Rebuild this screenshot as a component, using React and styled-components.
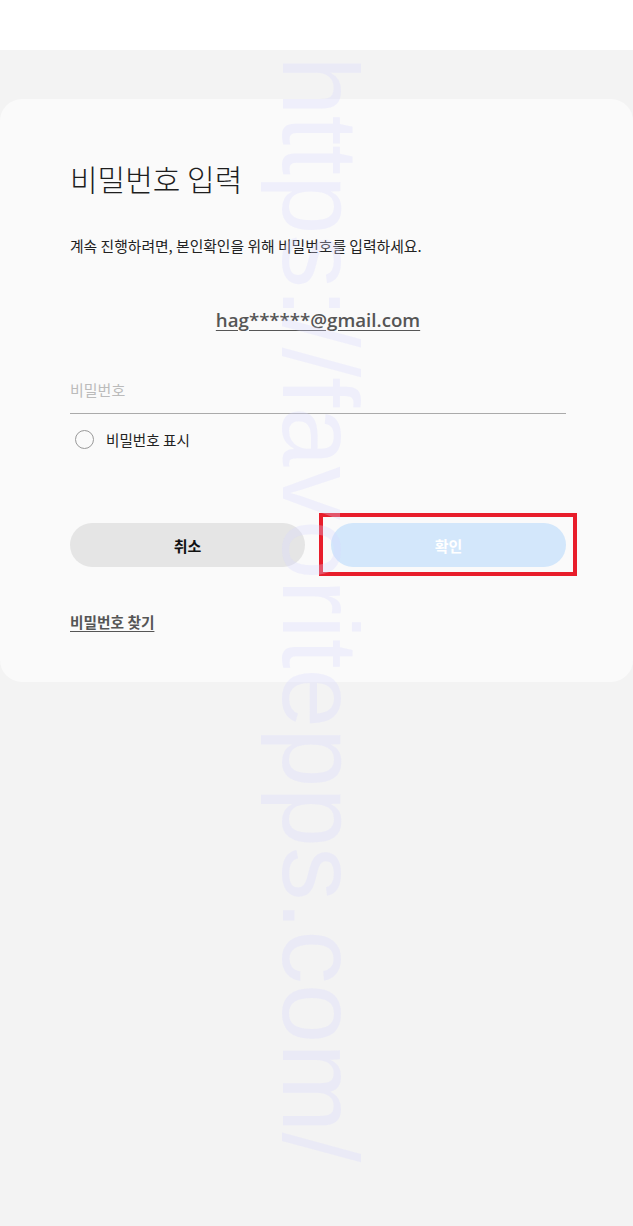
import React, { useState } from 'react'
import styled, { createGlobalStyle } from 'styled-components'

const GlobalStyle = createGlobalStyle`
  html, body {
    margin: 0;
    padding: 0;
    background: #f3f3f3;
  }
  body {
    font-family: "Noto Sans CJK KR", "Noto Sans", sans-serif;
    color: #222;
  }
`

const Page = styled.div`
  position: relative;
  min-height: 1226px;
  overflow: hidden;
  background: #f3f3f3;
`

const TopBar = styled.div`
  height: 50px;
  background: #ffffff;
`

const Card = styled.div`
  margin-top: 49px;
  background: #fafafa;
  border-radius: 22px;
  padding: 55px 67px 50px 70px;
  display: flex;
  flex-direction: column;
`

const Title = styled.h1`
  margin: 0;
  font-size: 30px;
  font-weight: 300;
  line-height: 48px;
  color: #1e1e1e;
`

const Desc = styled.p`
  margin: 33px 0 0;
  font-size: 14.8px;
  line-height: 21px;
  color: #222;
`

const Email = styled.div`
  margin-top: 50px;
  text-align: center;
  font-family: "Open Sans", "Noto Sans", sans-serif;
  font-size: 18.7px;
  font-weight: 600;
  line-height: 27px;
  color: #555;
  text-decoration: underline;
  text-underline-offset: 3px;
`

const PasswordInput = styled.input`
  margin-top: 33px;
  height: 47px;
  padding: 0;
  border: none;
  border-bottom: 1px solid #aaa;
  background: transparent;
  font-family: "Noto Sans CJK KR", sans-serif;
  font-size: 15px;
  color: #222;
  outline: none;
  &::placeholder {
    color: #bbb;
  }
`

const CheckRow = styled.label`
  margin-top: 10px;
  height: 30px;
  display: flex;
  align-items: center;
  gap: 12px;
  padding-left: 5px;
  font-size: 14.6px;
  color: #222;
  cursor: pointer;
`

const Circle = styled.span`
  width: 17px;
  height: 17px;
  border-radius: 50%;
  border: 1.5px solid ${p => (p.$on ? '#1a73e8' : '#999')};
  background: ${p => (p.$on ? '#1a73e8' : 'transparent')};
`

const ButtonRow = styled.div`
  margin-top: 69px;
  display: grid;
  grid-template-columns: 1fr 1fr;
  gap: 26px;
`

const Button = styled.button`
  height: 44px;
  border: none;
  border-radius: 22px;
  background: ${p => (p.$primary ? '#d3e7fb' : '#e5e5e5')};
  color: ${p => (p.$primary ? '#ffffff' : '#111')};
  font-family: "Noto Sans CJK KR", sans-serif;
  font-size: 15px;
  font-weight: 700;
  width: 100%;
`

const Marked = styled.div`
  position: relative;
`

const Highlight = styled.div`
  position: absolute;
  left: -12px;
  right: -11px;
  top: -10px;
  bottom: -9px;
  border: 4px solid #e81d2b;
  pointer-events: none;
`

const FindLink = styled.a`
  margin-top: 44px;
  align-self: flex-start;
  font-size: 14.7px;
  font-weight: 700;
  line-height: 21px;
  color: #555;
  text-decoration: underline;
  text-underline-offset: 3px;
`

const Watermark = styled.div`
  position: absolute;
  left: 373px;
  top: 56px;
  transform: rotate(90deg);
  transform-origin: top left;
  font-family: "Liberation Sans", Arial, sans-serif;
  font-size: 107px;
  line-height: 1;
  white-space: nowrap;
  color: rgba(216, 216, 255, 0.3);
  pointer-events: none;
`

export default function App() {
  const [show, setShow] = useState(false)
  const [pw, setPw] = useState('')

  return (
    <Page>
      <GlobalStyle />
      <TopBar />
      <Card>
        <Title>비밀번호 입력</Title>
        <Desc>계속 진행하려면, 본인확인을 위해 비밀번호를 입력하세요.</Desc>
        <Email>hag******@gmail.com</Email>
        <PasswordInput
          type={show ? 'text' : 'password'}
          placeholder="비밀번호"
          value={pw}
          onChange={e => setPw(e.target.value)}
        />
        <CheckRow onClick={() => setShow(!show)}>
          <Circle $on={show} />
          비밀번호 표시
        </CheckRow>
        <ButtonRow>
          <Button>취소</Button>
          <Marked>
            <Button $primary>확인</Button>
            <Highlight />
          </Marked>
        </ButtonRow>
        <FindLink>비밀번호 찾기</FindLink>
      </Card>
      <Watermark>https://favoritepps.com/</Watermark>
    </Page>
  )
}
